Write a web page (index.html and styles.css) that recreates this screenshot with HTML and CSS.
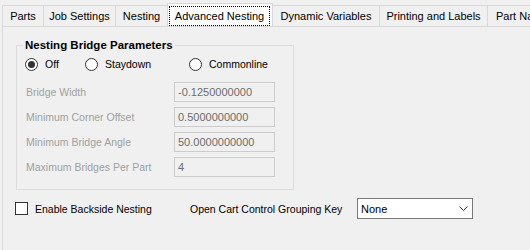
FILE: index.html
```html
<!DOCTYPE html>
<html>
<head>
<meta charset="utf-8">
<link rel="stylesheet" href="styles.css">
</head>
<body>
<div class="tabs">
  <div class="tab t-parts">Parts</div>
  <div class="tab t-job">Job Settings</div>
  <div class="tab t-nest">Nesting</div>
  <div class="tab t-adv selected"><span class="focus">Advanced Nesting</span></div>
  <div class="tab t-dyn">Dynamic Variables</div>
  <div class="tab t-print">Printing and Labels</div>
  <div class="tab t-part">Part Names</div>
</div>
<div class="page">
  <div class="group">
    <div class="group-title">Nesting Bridge Parameters</div>
    <div class="radios">
      <div class="radio r-off"><span class="circle checked"></span><span>Off</span></div>
      <div class="radio r-stay"><span class="circle"></span><span>Staydown</span></div>
      <div class="radio"><span class="circle"></span><span>Commonline</span></div>
    </div>
    <div class="fields">
      <div class="label">Bridge Width</div>
      <div class="box">-0.1250000000</div>
      <div class="label">Minimum Corner Offset</div>
      <div class="box">0.5000000000</div>
      <div class="label">Minimum Bridge Angle</div>
      <div class="box">50.0000000000</div>
      <div class="label">Maximum Bridges Per Part</div>
      <div class="box">4</div>
    </div>
  </div>
  <div class="bottom">
    <div class="check-item"><span class="checkbox"></span><span>Enable Backside Nesting</span></div>
    <div class="combo-label">Open Cart Control Grouping Key</div>
    <div class="combo">
      <span>None</span>
      <svg class="chev" width="9" height="5" viewBox="0 0 9 5"><path d="M0.5 0.5 L4.5 4.5 L8.5 0.5" fill="none" stroke="#333" stroke-width="1"/></svg>
    </div>
  </div>
</div>
</body>
</html>
```

FILE: styles.css
```css
html, body {
  margin: 0;
  padding: 0;
  background: #f0f0f0;
  width: 530px;
  height: 250px;
  overflow: hidden;
  font-family: "Liberation Sans", Arial, sans-serif;
  font-size: 11px;
  color: #000;
}

.tabs {
  display: flex;
  align-items: flex-end;
  height: 26px;
  padding-left: 2px;
  white-space: nowrap;
  overflow: hidden;
}

.tab {
  box-sizing: border-box;
  height: 21px;
  border: 1px solid #d9d9d9;
  border-bottom: none;
  background: #f0f0f0;
  display: flex;
  align-items: center;
  justify-content: center;
  flex: none;
  margin-left: -1px;
  line-height: 13px;
}
.t-parts { width: 42px; margin-left: 0; }
.t-job { width: 73px; }
.t-nest { width: 53px; }
.t-dyn { width: 108px; }
.t-print { width: 109px; }
.t-part { width: 80px; justify-content: flex-start; padding-left: 8px; }

.tab.selected {
  width: 106px;
  height: 24px;
  margin-bottom: -1px;
  background: #fff;
  position: relative;
  z-index: 1;
  align-items: stretch;
  justify-content: stretch;
}
.focus {
  flex: 1;
  display: flex;
  align-items: center;
  justify-content: center;
  margin: 2px 2px 1px 1px;
  border: 1px dotted #000;
}

.page {
  margin-left: 2px;
  border-left: 1px solid #d9d9d9;
  border-top: 1px solid #d9d9d9;
  height: 223px;
  padding-left: 12px;
  font-size: 10.5px;
}

.group {
  box-sizing: border-box;
  width: 278px;
  margin: 18px 0 0 1px;
  border: 1px solid #dcdcdc;
  padding: 0 0 12px 9px;
}
.group-title {
  display: block;
  width: max-content;
  margin: -7px 0 0 -3px;
  padding: 0 2px;
  background: #f0f0f0;
  font-weight: bold;
  font-size: 11.5px;
  line-height: 13px;
}

.radios {
  display: flex;
  align-items: center;
  height: 16px;
  margin: 4px 0 0 -1px;
}
.radio {
  display: flex;
  align-items: center;
  gap: 7px;
}
.r-off { width: 60px; }
.r-stay { width: 104px; }
.circle {
  box-sizing: border-box;
  width: 13px;
  height: 13px;
  border: 1px solid #333;
  border-radius: 50%;
  background: #fff;
  display: flex;
  align-items: center;
  justify-content: center;
}
.circle.checked::after {
  content: "";
  width: 7px;
  height: 7px;
  border-radius: 50%;
  background: #333;
}

.fields {
  display: grid;
  grid-template-columns: 148px 101px;
  grid-auto-rows: 20px;
  row-gap: 5px;
  margin-top: 10px;
  align-items: center;
}
.label {
  color: #a0a0a0;
}
.box {
  box-sizing: border-box;
  height: 20px;
  border: 1px solid #cccccc;
  background: #f0f0f0;
  color: #6d6d6d;
  padding-left: 3px;
  display: flex;
  align-items: center;
  font-size: 11px;
}

.bottom {
  display: flex;
  align-items: center;
  height: 21px;
  margin-top: 8px;
}
.check-item {
  width: 175px;
  display: flex;
  align-items: center;
  gap: 7px;
}
.checkbox {
  box-sizing: border-box;
  width: 13px;
  height: 13px;
  border: 1px solid #333;
  background: #fff;
}
.combo-label {
  width: 167px;
}
.combo {
  box-sizing: border-box;
  width: 116px;
  height: 21px;
  border: 1px solid #7a7a7a;
  background: #fff;
  display: flex;
  align-items: center;
  padding-left: 3px;
  font-size: 11px;
}
.chev {
  margin-left: auto;
  margin-right: 4px;
}
```
